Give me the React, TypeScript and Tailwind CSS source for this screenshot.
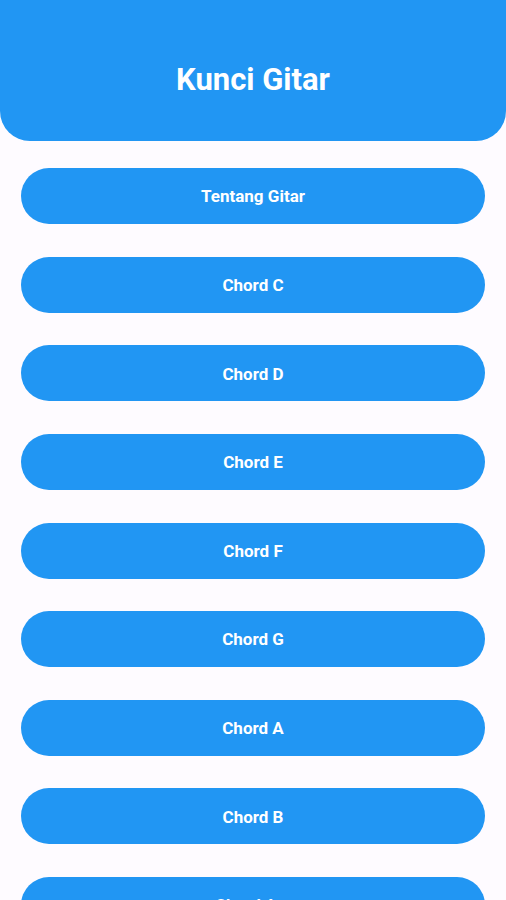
import React from "react";

const items = [
  "Tentang Gitar",
  "Chord C",
  "Chord D",
  "Chord E",
  "Chord F",
  "Chord G",
  "Chord A",
  "Chord B",
  "Chord Am",
];

export default function App() {
  return (
    <div
      className="min-h-[900px] h-[900px] overflow-hidden bg-[#fefbff] flex flex-col"
      style={{ fontFamily: "Roboto, 'Noto Sans', sans-serif" }}
    >
      <header className="h-[141px] shrink-0 bg-[#2196f3] rounded-b-[30px] flex justify-center pt-[62px]">
        <h1 className="text-white font-bold text-[31px] leading-[36px]">Kunci Gitar</h1>
      </header>
      <div className="flex flex-col gap-[32.625px] px-[21px] pt-[27px]">
        {items.map((t) => (
          <button
            key={t}
            className="h-[56px] w-full shrink-0 rounded-full bg-[#2196f3] text-white font-bold text-[17px] flex items-center justify-center pt-[2px]"
          >
            {t}
          </button>
        ))}
      </div>
    </div>
  );
}
